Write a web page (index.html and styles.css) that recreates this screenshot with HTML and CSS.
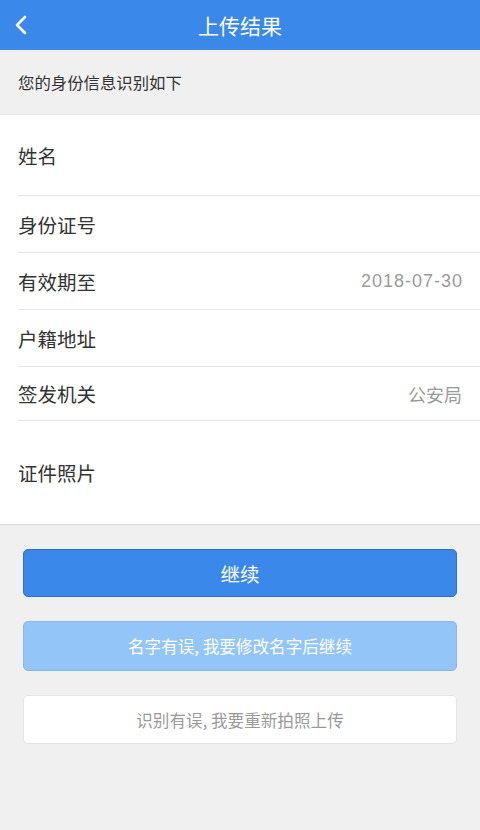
FILE: index.html
```html
<!DOCTYPE html>
<html lang="zh">
<head>
<meta charset="utf-8">
<title>上传结果</title>
<link rel="stylesheet" href="styles.css">
</head>
<body>
<div class="page">
  <header class="navbar">
    <span class="back">
      <svg width="14" height="20" viewBox="0 0 14 20"><path d="M11 2 L3 10 L11 18" fill="none" stroke="#fff" stroke-width="2.6" stroke-linecap="round" stroke-linejoin="round"/></svg>
    </span>
    <h1 class="title">上传结果</h1>
  </header>
  <div class="hint">您的身份信息识别如下</div>
  <ul class="list">
    <li class="row row-name"><span class="label">姓名</span></li>
    <li class="row row-std"><span class="label">身份证号</span></li>
    <li class="row row-std"><span class="label">有效期至</span><span class="value value-date">2018-07-30</span></li>
    <li class="row row-std"><span class="label">户籍地址</span></li>
    <li class="row row-short"><span class="label">签发机关</span><span class="value">公安局</span></li>
    <li class="row row-photo"><span class="label">证件照片</span></li>
  </ul>
  <div class="actions">
    <button class="btn btn-primary">继续</button>
    <button class="btn btn-light">名字有误, 我要修改名字后继续</button>
    <button class="btn btn-plain">识别有误, 我要重新拍照上传</button>
  </div>
</div>
</body>
</html>
```

FILE: styles.css
```css
* { box-sizing: border-box; }
html, body {
  margin: 0;
  padding: 0;
  background: #f0f0f0;
  font-family: "Noto Sans CJK SC", "Noto Sans", sans-serif;
}
.page {
  width: 480px;
  min-height: 830px;
  background: #f0f0f0;
}
.navbar {
  height: 50px;
  background: #3b88eb;
  display: flex;
  align-items: center;
  justify-content: center;
  position: relative;
}
.back {
  position: absolute;
  left: 14px;
  top: 15px;
  width: 14px;
  height: 20px;
  display: flex;
}
.title {
  margin: 0;
  color: #fff;
  font-size: 21px;
  font-weight: 400;
  line-height: 1;
}
.hint {
  height: 65px;
  padding-left: 18px;
  display: flex;
  align-items: center;
  font-size: 16.4px;
  color: #333;
  border-bottom: 1px solid #e4e4e4;
}
.list {
  list-style: none;
  margin: 0;
  padding: 0;
  background: #fff;
  border-bottom: 1px solid #dcdcdc;
}
.row {
  display: flex;
  align-items: center;
  justify-content: space-between;
  margin-left: 18px;
  padding-right: 18px;
  border-bottom: 1px solid #e6e6e6;
}
.row:last-child { border-bottom: none; }
.row-name { height: 81px; }
.row-std { height: 57px; }
.row-short { height: 54px; }
.row-photo { height: 103px; }
.label {
  font-size: 19.5px;
  color: #333;
}
.value {
  font-size: 18px;
  color: #9a9a9a;
}
.value-date {
  font-family: "Liberation Sans", "Noto Sans", sans-serif;
  letter-spacing: 1px;
  margin-right: -1px;
}
.actions {
  display: flex;
  flex-direction: column;
  gap: 24px;
  padding: 24px 23px 0;
}
.btn {
  width: 100%;
  border-radius: 5px;
  font-family: inherit;
  display: flex;
  align-items: center;
  justify-content: center;
  padding: 0;
}
.btn-primary {
  height: 48px;
  background: #3b88eb;
  border: 1px solid #2f73d2;
  color: #fff;
  font-size: 19.5px;
}
.btn-light {
  height: 50px;
  background: #93c5f8;
  border: 1px solid #88b9ee;
  color: #fff;
  font-size: 16.6px;
}
.btn-plain {
  height: 49px;
  background: #fff;
  border: 1px solid #e4e4e4;
  color: #9a9a9a;
  font-size: 16.6px;
}
```
